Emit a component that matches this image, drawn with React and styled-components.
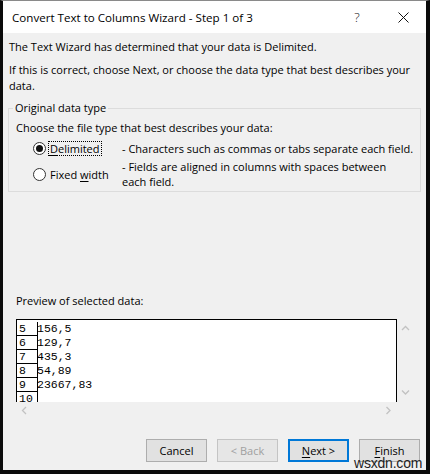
import React from "react";
import styled, { createGlobalStyle, css } from "styled-components";

const UI_FONT = `"Open Sans", "Noto Sans", sans-serif`;
const MONO_FONT = `"Liberation Mono", "Courier New", monospace`;

const previewRows = [
    { num: "5", value: "156,5" },
    { num: "6", value: "129,7" },
    { num: "7", value: "435,3" },
    { num: "8", value: "54,89" },
    { num: "9", value: "23667,83" },
    { num: "10", value: "" },
];

const Chevron = ({ dir }) => {
    const points = {
        up: "1,5 4.5,1.5 8,5",
        down: "1,1.5 4.5,5 8,1.5",
        left: "5,1 1.5,4.5 5,8",
        right: "1.5,1 5,4.5 1.5,8",
    }[dir];
    const vertical = dir === "up" || dir === "down";
    return (
        <svg width={vertical ? 9 : 7} height={vertical ? 7 : 9} viewBox={vertical ? "0 0 9 7" : "0 0 7 9"}>
            <polyline points={points} fill="none" stroke="#c2c2c2" strokeWidth="1.3" />
        </svg>
    );
};

export default function App() {
    return (
        <>
            <GlobalStyle />
            <Window>
                <TitleBar>
                    <Title>Convert Text to Columns Wizard - Step 1 of 3</Title>
                    <CaptionButton>
                        <HelpMark>?</HelpMark>
                    </CaptionButton>
                    <CaptionButton>
                        <svg width="11" height="11" viewBox="0 0 11 11">
                            <path d="M0.5 0.5 L10.5 10.5 M10.5 0.5 L0.5 10.5" stroke="#111" strokeWidth="1" />
                        </svg>
                    </CaptionButton>
                </TitleBar>

                <Body>
                    <Intro>The Text Wizard has determined that your data is Delimited.</Intro>
                    <Intro $gap>
                        If this is correct, choose Next, or choose the data type that best describes your
                        <br />
                        data.
                    </Intro>

                    <TypeBox>
                        <Legend>Original data type</Legend>
                        <Prompt>Choose the file type that best describes your data:</Prompt>
                        <Options>
                            <OptionRow>
                                <Radio $checked />
                                <OptionLabel $focused>
                                    <u>D</u>elimited
                                </OptionLabel>
                                <OptionDesc>- Characters such as commas or tabs separate each field.</OptionDesc>
                            </OptionRow>
                            <OptionRow>
                                <Radio />
                                <OptionLabel>
                                    Fixed <u>w</u>idth
                                </OptionLabel>
                                <OptionDesc>
                                    - Fields are aligned in columns with spaces between
                                    <br />
                                    each field.
                                </OptionDesc>
                            </OptionRow>
                        </Options>
                    </TypeBox>

                    <PreviewSection>
                        <PreviewLabel>Preview of selected data:</PreviewLabel>
                        <Preview>
                            <DataPane>
                                {previewRows.map((row) => (
                                    <DataRow key={row.num}>
                                        <RowNum>{row.num}</RowNum>
                                        <RowValue>{row.value}</RowValue>
                                    </DataRow>
                                ))}
                            </DataPane>
                            <VScroll>
                                <Chevron dir="up" />
                                <Chevron dir="down" />
                            </VScroll>
                            <HScroll>
                                <Chevron dir="left" />
                                <Chevron dir="right" />
                            </HScroll>
                            <ScrollCorner />
                        </Preview>
                    </PreviewSection>

                    <ButtonRow>
                        <Button>Cancel</Button>
                        <Button disabled>&lt; Back</Button>
                        <Button $default>
                            <u>N</u>ext &gt;
                        </Button>
                        <Button>
                            <u>F</u>inish
                        </Button>
                    </ButtonRow>
                </Body>

                <Watermark>wsxdn.com</Watermark>
            </Window>
        </>
    );
}

// styles
const GlobalStyle = createGlobalStyle`
html, body {
    margin: 0;
    padding: 0;
    background: #ffffff;
}
* {
    box-sizing: border-box;
}
`;

const Window = styled.div`
position: relative;
width: 430px;
height: 474px;
display: flex;
flex-direction: column;
background: #f0f0f0;
border-top: 1px solid #8a8a8a;
border-left: 3px solid #0b0b0b;
border-right: 4px solid #0b0b0b;
border-bottom: 4px solid #0b0b0b;
font-family: ${UI_FONT};
font-size: 11px;
color: #000;
`;

const TitleBar = styled.div`
height: 32px;
flex: none;
display: flex;
align-items: center;
padding-left: 9px;
background: #ffffff;
`;

const Title = styled.div`
flex: 1;
font-size: 11.6px;
color: #000;
white-space: nowrap;
`;

const CaptionButton = styled.div`
width: 46px;
height: 32px;
display: flex;
align-items: center;
justify-content: center;
`;

const HelpMark = styled.span`
font-family: ${UI_FONT};
font-size: 13px;
font-weight: 300;
color: #111;
`;

const Body = styled.div`
flex: 1;
display: flex;
flex-direction: column;
padding: 0 5px 8px 5px;
`;

const Intro = styled.div`
margin-top: ${(p) => (p.$gap ? "7px" : "6px")};
padding-left: 1px;
line-height: 16px;
white-space: nowrap;
`;

const TypeBox = styled.fieldset`
margin: 6px 0 0;
padding: 0 0 2px 7px;
border: 1px solid #dcdcdc;
min-width: 0;
`;

const Legend = styled.legend`
margin-left: -3px;
padding: 0 2px;
line-height: 16px;
`;

const Prompt = styled.div`
margin-top: 4px;
line-height: 16px;
`;

const Options = styled.div`
display: flex;
flex-direction: column;
gap: 3px;
margin-top: 5px;
padding-left: 17px;
`;

const OptionRow = styled.div`
display: grid;
grid-template-columns: 13px 70px 1fr;
column-gap: 3px;
align-items: center;
`;

const Radio = styled.span`
width: 13px;
height: 13px;
border-radius: 50%;
border: 1px solid #333;
background: #fff;
position: relative;
${(p) =>
        p.$checked &&
        css`
    &::after {
        content: "";
        position: absolute;
        left: 2px;
        top: 2px;
        width: 7px;
        height: 7px;
        border-radius: 50%;
        background: #111;
    }
`}
`;

const OptionLabel = styled.span`
justify-self: start;
line-height: 13px;
padding: 0 1px 0 1px;
outline: ${(p) => (p.$focused ? "1px dotted #000" : "none")};
outline-offset: 0;
u {
    text-underline-offset: 2px;
}
`;

const OptionDesc = styled.span`
line-height: 15px;
white-space: nowrap;
`;

const PreviewSection = styled.div`
margin-top: auto;
margin-left: 8px;
display: flex;
flex-direction: column;
`;

const PreviewLabel = styled.div`
line-height: 16px;
`;

const Preview = styled.div`
margin-top: 10px;
width: 398px;
display: grid;
grid-template-columns: 381px 17px;
grid-template-rows: 83px 17px;
`;

const DataPane = styled.div`
background: #fff;
border: 1px solid #000;
border-bottom: none;
padding-top: 2px;
overflow: hidden;
`;

const DataRow = styled.div`
display: flex;
height: 14px;
font-family: ${MONO_FONT};
font-size: 11.5px;
line-height: 13px;
`;

const RowNum = styled.div`
width: 21px;
padding-left: 2px;
border-right: 1px solid #000;
border-bottom: 1px solid #000;
`;

const RowValue = styled.div`
flex: 1;
margin-left: -1px;
`;

const VScroll = styled.div`
display: flex;
flex-direction: column;
align-items: center;
justify-content: space-between;
padding: 6px 1px 6px 0;
`;

const HScroll = styled.div`
display: flex;
align-items: center;
justify-content: space-between;
padding: 0 5px 0 5px;
`;

const ScrollCorner = styled.div`
background: #f0f0f0;
`;

const ButtonRow = styled.div`
margin-top: 20px;
margin-right: 1px;
display: flex;
justify-content: flex-end;
gap: 10px;
`;

const Button = styled.button`
width: 61px;
height: 23px;
padding: 0;
font-family: ${UI_FONT};
font-size: 11px;
color: #000;
background: #e1e1e1;
border: 1px solid #adadad;
border-radius: 0;
${(p) =>
        p.$default &&
        css`
    border: 2px solid #0078d7;
`}
&:disabled {
    color: #a0a0a0;
    background: #e6e6e6;
    border-color: #c4c4c4;
}
u {
    text-underline-offset: 2px;
}
`;

const Watermark = styled.div`
position: absolute;
right: 8px;
bottom: 0;
width: 64px;
text-align: right;
font-family: "Liberation Sans", Arial, sans-serif;
font-size: 14px;
line-height: 14px;
letter-spacing: -0.2px;
color: #1e1e1e;
white-space: nowrap;
`;
